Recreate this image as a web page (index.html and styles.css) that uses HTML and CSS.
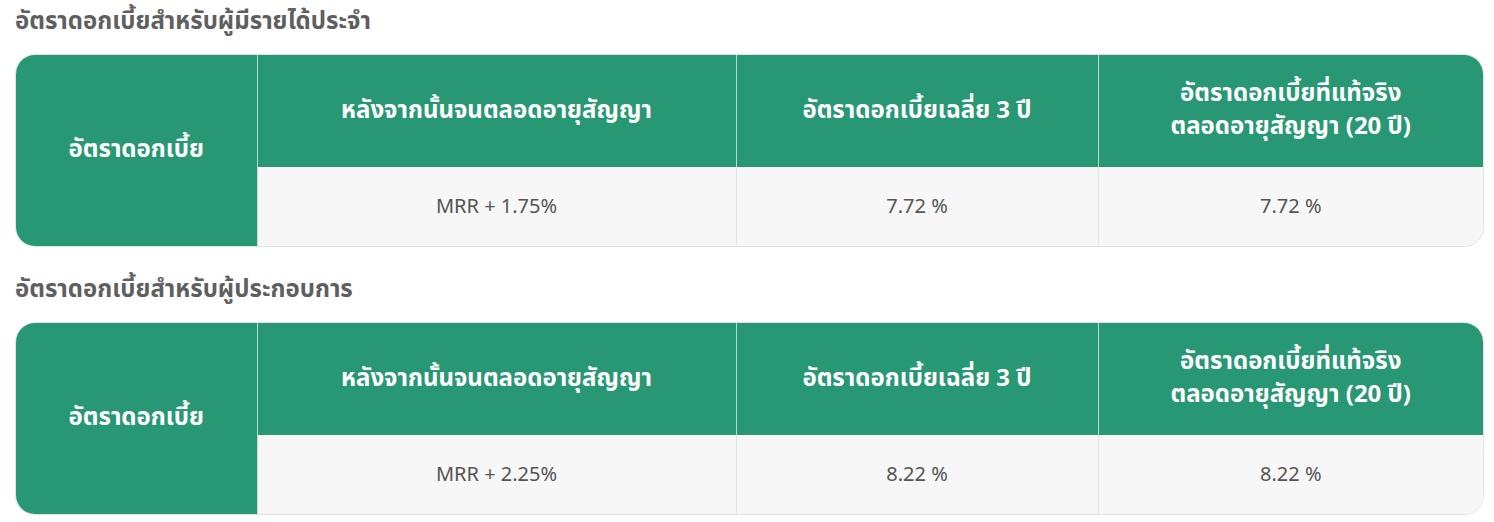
FILE: index.html
```html
<!DOCTYPE html>
<html lang="th">
<head>
<meta charset="utf-8">
<link rel="stylesheet" href="styles.css">
</head>
<body>
<div class="page">
  <section class="block">
    <h2 class="title">อัตราดอกเบี้ยสำหรับผู้มีรายได้ประจำ</h2>
    <div class="table-wrap">
      <table class="rate">
        <colgroup>
          <col class="c1"><col class="c2"><col class="c3"><col class="c4">
        </colgroup>
        <tr class="head">
          <th rowspan="2" class="label">อัตราดอกเบี้ย</th>
          <th>หลังจากนั้นจนตลอดอายุสัญญา</th>
          <th>อัตราดอกเบี้ยเฉลี่ย 3 ปี</th>
          <th>อัตราดอกเบี้ยที่แท้จริง<br>ตลอดอายุสัญญา (20 ปี)</th>
        </tr>
        <tr class="data">
          <td>MRR + 1.75%</td>
          <td>7.72 %</td>
          <td>7.72 %</td>
        </tr>
      </table>
    </div>
  </section>
  <section class="block">
    <h2 class="title">อัตราดอกเบี้ยสำหรับผู้ประกอบการ</h2>
    <div class="table-wrap">
      <table class="rate">
        <colgroup>
          <col class="c1"><col class="c2"><col class="c3"><col class="c4">
        </colgroup>
        <tr class="head">
          <th rowspan="2" class="label">อัตราดอกเบี้ย</th>
          <th>หลังจากนั้นจนตลอดอายุสัญญา</th>
          <th>อัตราดอกเบี้ยเฉลี่ย 3 ปี</th>
          <th>อัตราดอกเบี้ยที่แท้จริง<br>ตลอดอายุสัญญา (20 ปี)</th>
        </tr>
        <tr class="data">
          <td>MRR + 2.25%</td>
          <td>8.22 %</td>
          <td>8.22 %</td>
        </tr>
      </table>
    </div>
  </section>
</div>
</body>
</html>
```
FILE: styles.css
```css
* { box-sizing: border-box; }
html, body { margin: 0; padding: 0; background: #fff; }
body {
  font-family: "Noto Sans Thai", "Noto Sans", "DejaVu Sans", sans-serif;
  color: #555;
}
.page {
  padding: 6px 10px 0 15px;
  display: flex;
  flex-direction: column;
  gap: 27px;
}
.block { display: flex; flex-direction: column; }
.title {
  margin: 0;
  font-size: 24px;
  font-weight: 700;
  color: #5f5f5f;
  line-height: 32px;
  height: 32px;
}
.table-wrap {
  margin-top: 16px;
  border: 1px solid #e2e2e2;
  border-radius: 20px;
  overflow: hidden;
  width: 1469px;
}
.rate {
  width: 100%;
  border-collapse: collapse;
  table-layout: fixed;
}
.c1 { width: 241px; }
.c2 { width: 479px; }
.c3 { width: 362px; }
.c4 { width: auto; }
.rate th {
  background: #289773;
  color: #fff;
  font-size: 24px;
  font-weight: 700;
  line-height: 33px;
  height: 112px;
  padding: 0 4px;
  text-align: center;
  border-left: 1px solid #b9d9cc;
}
.rate th.label { border-left: none; }
.rate td {
  background: #f7f7f7;
  color: #555;
  font-size: 20px;
  height: 79px;
  text-align: center;
  border-left: 1px solid #e4e4e4;
}
.rate tr.data td:first-child { border-left: 1px solid #c9ddd5; }
```
